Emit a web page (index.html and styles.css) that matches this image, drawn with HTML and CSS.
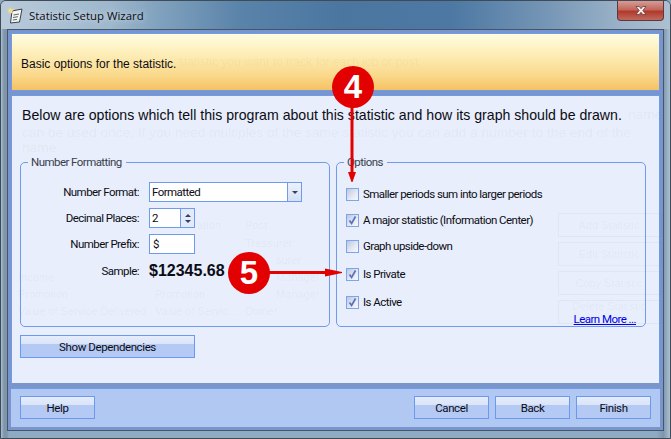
FILE: index.html
```html
<!doctype html>
<html lang="en">
  <head>
    <meta charset="UTF-8" />
    <meta name="viewport" content="width=device-width, initial-scale=1.0" />
    <title>Statistic Setup Wizard</title>
    <link rel="stylesheet" href="styles.css">
  </head>
  <body>
    <div class="window">
      <div class="titlebar">
        <svg class="appIcon" width="16" height="18" viewBox="0 0 16 18">
          <path d="M5 5 L15 3 L12.5 16 L3.5 17 Z" fill="#f6f6f0" stroke="#39424c" stroke-width="1" />
          <path d="M6.5 9 L12 8 M6 11.5 L11 10.7 M5.8 14 L10 13.4" stroke="#5b6570" stroke-width="1" />
          <path d="M3 0.5 L4.2 3.2 L7.5 3 L5.2 5.2 L6.2 8 L3.4 6.4 L0.8 7.6 L1.8 5 L0 3 L2.4 3.2 Z" fill="#f5dc86" />
        </svg>
        <span class="titleText">Statistic Setup Wizard</span>
        <div class="closeBtn">
          <svg width="16" height="11" viewBox="0 0 16 11">
            <path d="M3 1.5 H6.2 L8 3.7 L9.8 1.5 H13 L9.8 5.5 L13 9.5 H9.8 L8 7.3 L6.2 9.5 H3 L6.2 5.5 Z" fill="#f4f0ee" stroke="#6b3a38" stroke-width="0.8" />
          </svg>
        </div>
      </div>

      <div class="client">
        <div class="header">Basic options for the statistic.</div>
        <div class="body">
          <p class="intro">Below are options which tell this program about this statistic and how its graph should be drawn.</p>
          <div class="groups">
            <fieldset class="group">
              <legend>Number Formatting</legend>
              <div class="formRow">
                <label>Number Format:</label>
                <div class="combo">
                  <span class="comboValue">Formatted</span>
                  <span class="comboBtn"><i class="arrowDown"></i></span>
                </div>
              </div>
              <div class="formRow">
                <label>Decimal Places:</label>
                <div class="spin">
                  <span class="comboValue">2</span>
                  <span class="spinBtn"><i class="arrowUp"></i><i class="arrowDown"></i></span>
                </div>
              </div>
              <div class="formRow">
                <label>Number Prefix:</label>
                <div class="textBox">$</div>
              </div>
              <div class="formRow sampleRow">
                <label>Sample:</label>
                <div class="sample">$12345.68</div>
              </div>
            </fieldset>

            <fieldset class="group">
              <legend>Options</legend>
              <div class="check first"><span class="box"></span>Smaller periods sum into larger periods</div>
              <div class="check"><span class="box checked"><svg width="11" height="11" viewBox="0 0 11 11"><path d="M2.5 5.5 L4.6 8.5 L8.5 1.5" fill="none" stroke="#5a72b8" stroke-width="1.7" /></svg></span>A major statistic (Information Center)</div>
              <div class="check"><span class="box"></span>Graph upside-down</div>
              <div class="check wide"><span class="box checked"><svg width="11" height="11" viewBox="0 0 11 11"><path d="M2.5 5.5 L4.6 8.5 L8.5 1.5" fill="none" stroke="#5a72b8" stroke-width="1.7" /></svg></span>Is Private</div>
              <div class="check wide"><span class="box checked"><svg width="11" height="11" viewBox="0 0 11 11"><path d="M2.5 5.5 L4.6 8.5 L8.5 1.5" fill="none" stroke="#5a72b8" stroke-width="1.7" /></svg></span>Is Active</div>
              <div class="learnRow"><a class="learnMore" href="#">Learn More ...</a></div>
            </fieldset>
          </div>
          <button class="btn depsBtn">Show Dependencies</button>
        </div>
        <div class="footer">
          <button class="btn">Help</button>
          <div class="spacer"></div>
          <button class="btn">Cancel</button>
          <button class="btn">Back</button>
          <button class="btn">Finish</button>
        </div>
      </div>

      <!-- the window behind shows through the glass -->
      <div class="ghost">
        <span class="g g1">statistic you want to track for each job or post.</span>
        <span class="g g2">name</span>
        <span class="g g3">can be used once. If you need multiples of the same statistic you can add a number to the end of the</span>
        <span class="g g4">name.</span>
        <span class="g gAbbrTail r0">ation</span><span class="g gPost r0">Post</span>
        <span class="g gPost r1">Treasurer</span>
        <span class="g gTail r2">surer</span>
        <span class="g gName r3">Income</span><span class="g gTail r3">Manager</span>
        <span class="g gName r4">Promotion</span><span class="g gAbbr r4">Promotion</span><span class="g gTail r4">Manager</span>
        <span class="g gName r5">Value of Service Delivered</span><span class="g gAbbr r5">Value of Servic...</span><span class="g gPost r5">Owner</span>
        <i class="gBox b0"></i><i class="gBox b1"></i><i class="gBox b2"></i><i class="gBox b3"></i>
        <span class="g gBtn t0">Add Statistic</span>
        <span class="g gBtn t1">Edit Statistic</span>
        <span class="g gBtn t2">Copy Statistic</span>
        <span class="g gBtn t3">Delete Statistic</span>
      </div>

      <!-- callouts -->
      <svg class="arrows" width="671" height="439" viewBox="0 0 671 439">
        <path d="M352 100 V174" stroke="#e30000" stroke-width="3" />
        <path d="M348 172 H356 L352.5 182 H351.5 Z" fill="#e30000" />
        <path d="M265 272.5 H328" stroke="#e30000" stroke-width="3" />
        <path d="M325 268.5 L342 272 V273 L325 276.5 Z" fill="#e30000" />
      </svg>
      <div class="badge badge4">4</div>
      <div class="badge badge5">5</div>
    </div>
  </body>
</html>
```

FILE: styles.css
```css
html,
body {
  margin: 0;
  padding: 0;
}
body {
  background-color: #8ea9c0;
  font-family: Roboto, "Liberation Sans", sans-serif;
  font-size: 11.5px;
  letter-spacing: -0.55px;
  color: #0c0c14;
}

.window {
  position: relative;
  width: 671px;
  height: 439px;
  display: flex;
  flex-direction: column;
  overflow: hidden;
  box-sizing: border-box;
  border: 1px solid #3f4c58;
  border-radius: 6px 6px 0 0;
  background: linear-gradient(90deg, #a9bfd2 0, #7f96aa 3px, #7f96aa 6px, #8eabc3 8px, #8eabc3 98%, #7f96aa 99%, #a9bfd2 100%);
}

/* title bar */
.titlebar {
  height: 28px;
  flex-shrink: 0;
  display: flex;
  align-items: center;
  padding-left: 6px;
  background: linear-gradient(90deg, #b9cbdb 0, #9db7cc 110px, #7fa1bd 160px, #5a83a9 240px, #4a76a0 340px, #4c78a3 450px, #7394b4 540px, #9bb2c8 620px, #adc0d1 100%);
}
.appIcon {
  margin-right: 6px;
}
.titleText {
  font-family: "Open Sans", sans-serif;
  font-size: 11.4px;
  letter-spacing: 0;
  text-shadow: 0 0 6px rgba(255, 255, 255, 0.7);
}
.closeBtn {
  margin-left: auto;
  margin-right: 6px;
  margin-top: -9px;
  width: 47px;
  height: 20px;
  display: flex;
  align-items: center;
  justify-content: center;
  box-sizing: border-box;
  border: 1px solid #5a3a3e;
  border-top: 0;
  border-radius: 0 0 4px 4px;
  background: linear-gradient(180deg, #d79c94 0, #c2675c 45%, #b13a2c 55%, #c0695e 100%);
}

/* dialog client area */
.client {
  flex: 1;
  margin: 0 6px 7px 6px;
  padding: 3px;
  display: flex;
  flex-direction: column;
  border: 1px solid #45566a;
  background-color: #7a95cc;
  min-height: 0;
}

.header {
  height: 58px;
  flex-shrink: 0;
  box-sizing: border-box;
  display: flex;
  align-items: center;
  padding: 3px 0 0 9px;
  border: 1px solid #6f9bec;
  font-family: "Liberation Sans", sans-serif;
  font-size: 12px;
  letter-spacing: 0;
  background: linear-gradient(180deg, #fffde0 0, #fdeeb8 35%, #fad88a 75%, #f6c163 100%);
}

.body {
  flex: 1;
  margin-top: 4px;
  box-sizing: border-box;
  padding: 0 8px;
  border: 1px solid #6f9bec;
  border-bottom: 0;
  background-color: #e8eefb;
  display: flex;
  flex-direction: column;
  align-items: flex-start;
}
.intro {
  margin: 10px 0 0 2px;
  font-family: "Liberation Sans", sans-serif;
  font-size: 14.13px;
  letter-spacing: 0;
  line-height: 18px;
  white-space: nowrap;
}

.groups {
  display: flex;
  gap: 6px;
  margin-top: 31px;
}
.group {
  width: 310px;
  height: 172px;
  box-sizing: border-box;
  margin: 0;
  padding: 0;
  border: 1px solid #6f9bec;
  border-radius: 5px;
}
.group legend {
  margin-left: 7px;
  padding: 0 4px 0 3px;
  line-height: 14px;
  color: #37404c;
}

/* left group */
.formRow {
  display: flex;
  align-items: center;
  height: 20px;
  margin-top: 6px;
}
.formRow:first-of-type {
  margin-top: 13px;
}
.formRow label {
  width: 118px;
  margin-right: 10px;
  text-align: right;
}
.combo,
.spin,
.textBox {
  height: 20px;
  box-sizing: border-box;
  border: 1px solid #6f9bec;
  background-color: #ffffff;
  display: flex;
  align-items: center;
}
.combo {
  width: 153px;
}
.spin,
.textBox {
  width: 46px;
}
.textBox {
  padding-left: 3px;
}
.comboValue {
  flex: 1;
  padding-left: 2px;
}
.comboBtn {
  width: 13px;
  height: 100%;
  border-left: 1px solid #6f9bec;
  background: linear-gradient(180deg, #edf2fb 0, #d5e0f5 100%);
  display: flex;
  align-items: center;
  justify-content: center;
}
.spinBtn {
  width: 13px;
  height: 100%;
  border-left: 1px solid #6f9bec;
  background-color: #e3eafa;
  display: flex;
  flex-direction: column;
  align-items: center;
  justify-content: center;
  gap: 3px;
}
.arrowDown,
.arrowUp {
  display: block;
  width: 0;
  height: 0;
  border-left: 3px solid transparent;
  border-right: 3px solid transparent;
}
.arrowDown {
  border-top: 3px solid #33415f;
}
.arrowUp {
  border-bottom: 3px solid #33415f;
}
.sampleRow {
  margin-top: 7px;
}
.sample {
  font-family: "Liberation Sans", sans-serif;
  font-weight: bold;
  font-size: 16px;
  letter-spacing: 0;
}

/* right group */
.check {
  display: flex;
  align-items: center;
  height: 16px;
  margin: 10px 0 0 9px;
  white-space: nowrap;
}
.check.first {
  margin-top: 17px;
}
.check.wide {
  margin-top: 12px;
}
.box {
  width: 13px;
  height: 13px;
  box-sizing: border-box;
  flex-shrink: 0;
  margin-right: 4px;
  border: 1px solid #7ba6ee;
  background: linear-gradient(135deg, #bcc6de 0, #e6eaf5 60%, #f7f8fc 100%);
  display: flex;
  align-items: center;
  justify-content: center;
}
.learnRow {
  display: flex;
  justify-content: flex-end;
  margin: 3px 9px 0 0;
  line-height: 12px;
}
.learnMore {
  color: #0000e8;
}

/* buttons */
.btn {
  width: 75px;
  height: 23px;
  padding: 0;
  box-sizing: border-box;
  font-family: inherit;
  font-size: 11.5px;
  letter-spacing: -0.4px;
  color: #0c0c14;
  border: 1px solid #6a99f4;
  background: linear-gradient(180deg, #e6edfb 0, #dbe5f8 36%, #b4c9f3 37%, #b4c9f3 100%);
}
.depsBtn {
  width: 175px;
  margin-top: 8px;
}

.footer {
  height: 39px;
  flex-shrink: 0;
  margin-top: 5px;
  box-sizing: border-box;
  padding: 7px 9px 0 9px;
  border-top: 1px solid #6f9bec;
  background-color: #b1c8f2;
  display: flex;
  align-items: flex-start;
  gap: 6px;
}
.spacer {
  flex: 1;
}

/* faint window showing through */
.ghost {
  position: absolute;
  left: -1px;
  top: -1px;
  width: 671px;
  height: 439px;
  pointer-events: none;
  font-family: "Liberation Sans", sans-serif;
  letter-spacing: 0;
  font-size: 11px;
  line-height: 12px;
  color: rgba(50, 60, 90, 0.05);
}
.g {
  position: absolute;
  white-space: nowrap;
}
.g1 { left: 178px; top: 56px; font-size: 12px; }
.g2 { left: 628px; top: 109px; font-size: 13.7px; }
.g3 { left: 22px; top: 127px; font-size: 13.7px; }
.g4 { left: 22px; top: 142px; font-size: 13.7px; }
.gName { left: 18px; }
.gAbbr { left: 155px; }
.gAbbrTail { left: 197px; }
.gPost { left: 245px; }
.gTail { left: 276px; }
.r0 { top: 219px; }
.r1 { top: 237px; }
.r2 { top: 254px; }
.r3 { top: 271px; }
.r4 { top: 288px; }
.r5 { top: 305px; }
.gBox {
  position: absolute;
  left: 558px;
  width: 102px;
  height: 22px;
  border: 1px solid rgba(50, 60, 90, 0.04);
}
.gBtn { left: 558px; width: 102px; text-align: center; }
.b0 { top: 213px; }
.b1 { top: 242px; }
.b2 { top: 271px; }
.b3 { top: 300px; }
.t0 { top: 219px; }
.t1 { top: 248px; }
.t2 { top: 277px; }
.t3 { top: 300px; }

/* callouts */
.arrows {
  position: absolute;
  left: -1px;
  top: -1px;
  pointer-events: none;
}
.badge {
  position: absolute;
  width: 42px;
  height: 42px;
  border-radius: 50%;
  background-color: #e30000;
  color: #ffffff;
  font-family: "Liberation Sans", sans-serif;
  font-weight: bold;
  font-size: 33px;
  letter-spacing: 0;
  line-height: 42px;
  text-align: center;
}
.badge4 {
  left: 331px;
  top: 65px;
}
.badge5 {
  left: 227px;
  top: 251px;
}
```
